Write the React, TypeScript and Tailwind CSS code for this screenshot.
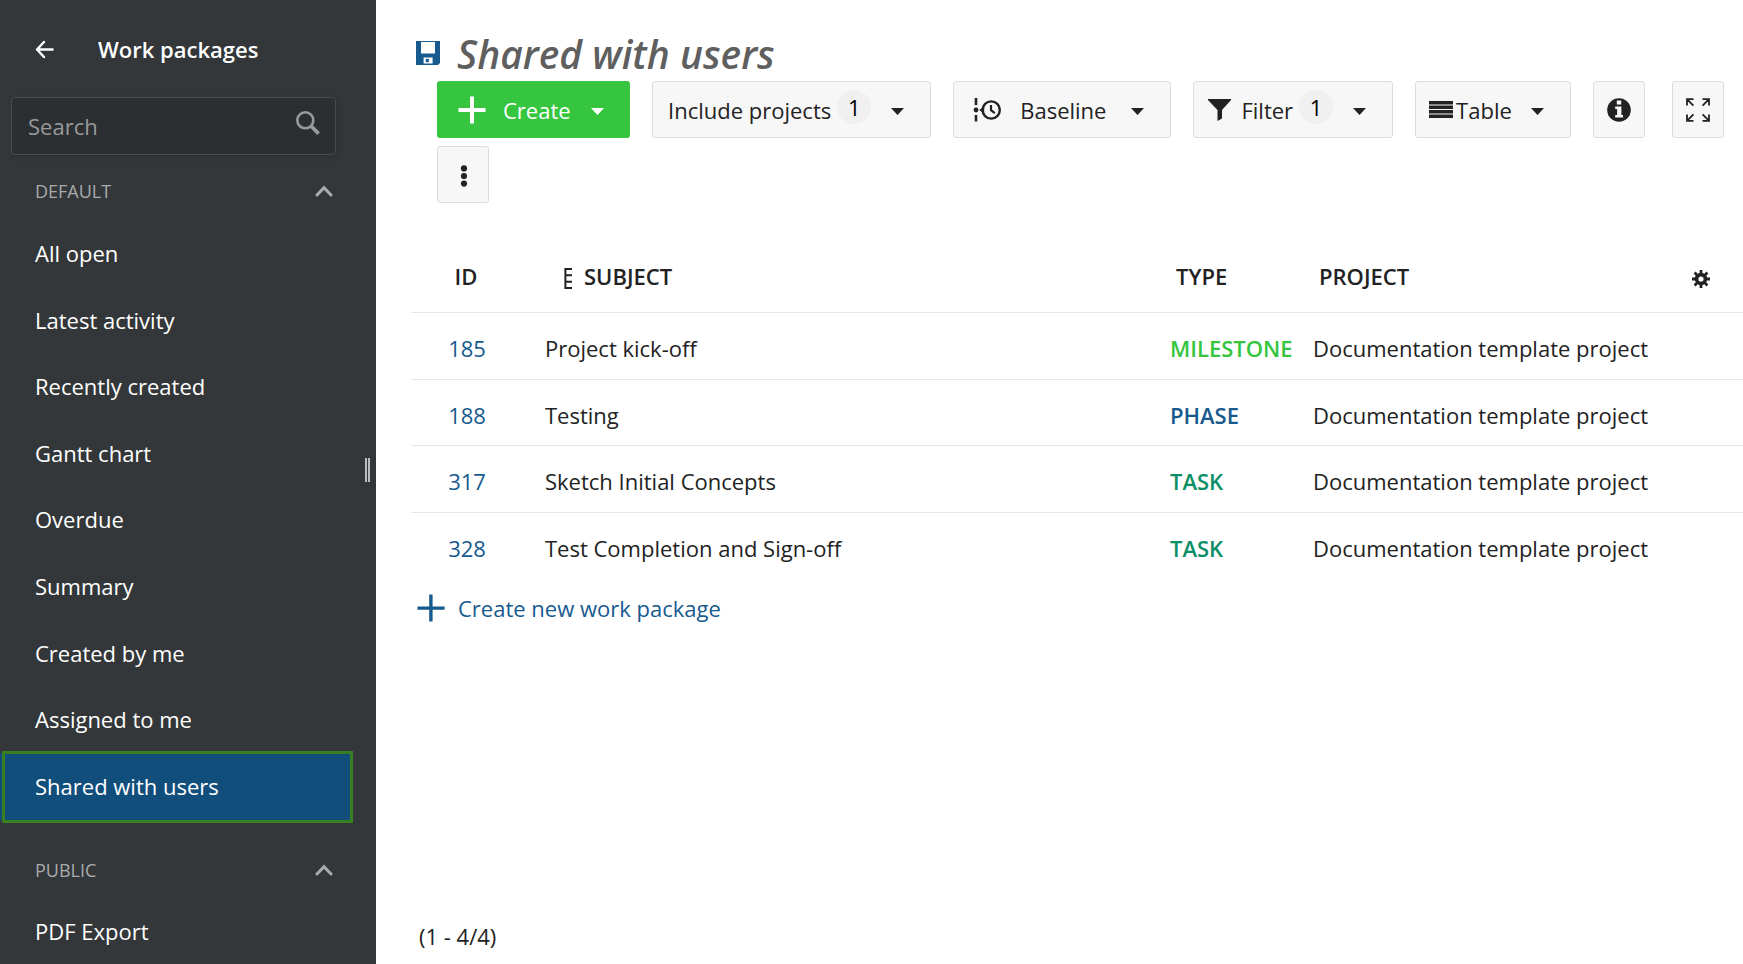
import type { ReactNode } from "react";

const defaultViews = [
  "All open",
  "Latest activity",
  "Recently created",
  "Gantt chart",
  "Overdue",
  "Summary",
  "Created by me",
  "Assigned to me",
  "Shared with users",
];

const workPackages = [
  { id: 185, subject: "Project kick-off", type: "Milestone", color: "text-[#35c53f]" },
  { id: 188, subject: "Testing", type: "Phase", color: "text-[#175a8e]" },
  { id: 317, subject: "Sketch Initial Concepts", type: "Task", color: "text-[#0b8f66]" },
  { id: 328, subject: "Test Completion and Sign-off", type: "Task", color: "text-[#0b8f66]" },
];

function Caret() {
  return (
    <svg className="mt-1 h-[7px] w-[13px] shrink-0" viewBox="0 0 13 7" fill="currentColor" aria-hidden="true">
      <path d="M0 0h13L6.5 7z" />
    </svg>
  );
}

function Plus() {
  return (
    <svg className="size-7 shrink-0" viewBox="0 0 28 28" fill="currentColor" aria-hidden="true">
      <path d="M12 .5h4V12h11.5v4H16v11.5h-4V16H.5v-4H12z" />
    </svg>
  );
}

function ThinPlus() {
  return (
    <svg className="size-7 shrink-0" viewBox="0 0 28 28" fill="currentColor" aria-hidden="true">
      <path d="M12.2 .5h3.4v12h12v3.3h-12v11.7h-3.4V15.8H.5v-3.3h11.7z" />
    </svg>
  );
}

function Chevron() {
  return (
    <svg className="h-3 w-[18px]" viewBox="0 0 18 12" fill="none" stroke="currentColor" strokeWidth="3" strokeLinecap="round" aria-hidden="true">
      <path d="M2 10 9 2.6 16 10" />
    </svg>
  );
}

function Badge({ children }: { children: ReactNode }) {
  return (
    <span className="mr-5 mb-1.5 flex size-[34px] items-center justify-center rounded-full bg-[#f0f0f0] text-black">
      {children}
    </span>
  );
}

const toolButton =
  "flex h-[57px] items-center rounded-[3px] border border-[#dddddd] bg-[#f7f7f7] pr-[26px] text-[#222222]";
const squareButton =
  "flex h-[57px] w-[52px] items-center justify-center rounded-[3px] border border-[#dddddd] bg-[#f7f7f7] text-[#222222]";

function SectionHeading({ children }: { children: ReactNode }) {
  return (
    <button
      type="button"
      className="flex h-[66px] w-full items-center justify-between pt-1.5 pl-[35px] pr-[43px] text-[18px] text-[#a9abac]"
    >
      <span>{children}</span>
      <Chevron />
    </button>
  );
}

function ViewItem({ label }: { label: string }) {
  const selected = label === "Shared with users";
  return (
    <li className="relative">
      <a
        href="#view"
        aria-current={selected ? "page" : undefined}
        className={
          selected
            ? "flex h-full w-[350px] items-center bg-[#124e7c] pb-0.5 pl-[35px]"
            : "flex h-full w-[350px] items-center pb-0.5 pl-[35px]"
        }
      >
        {label}
      </a>
      {selected && (
        <span className="pointer-events-none absolute top-[-2px] left-0.5 h-[72px] w-[351px] border-3 border-[#377f1f]" />
      )}
    </li>
  );
}

function Sidebar() {
  return (
    <aside className="relative h-screen w-[376px] shrink-0 overflow-hidden bg-[#333739] text-white">
      <header className="flex h-[97px] items-center pl-[35px]">
        <button type="button" aria-label="Back" className="w-[63px]">
          <svg className="size-5" viewBox="0 0 20 20" fill="none" stroke="currentColor" strokeWidth="2.4" strokeLinecap="round" strokeLinejoin="round" aria-hidden="true">
            <path d="M9 3 2 10.5 9 18M2.4 10.5H17.6" />
          </svg>
        </button>
        <h2 className="font-semibold">Work packages</h2>
      </header>

      <label className="ml-[11px] flex h-[58px] w-[325px] items-center rounded-[4px] border border-[#484c4f] bg-[#2b2f32] pr-[15px] pl-4 shadow-[2px_2px_6px_rgba(0,0,0,0.15)]">
        <input
          type="text"
          placeholder="Search"
          aria-label="Search"
          className="min-w-0 flex-1 bg-transparent outline-none placeholder:text-[#989a9b]"
        />
        <svg className="mb-1.5 size-6 text-[#989a9b]" viewBox="0 0 24 24" fill="none" stroke="currentColor" aria-hidden="true">
          <circle cx="9.3" cy="9.3" r="8" strokeWidth="2.6" />
          <path d="m15 15 7.6 7.6" strokeWidth="3.8" />
        </svg>
      </label>

      <nav>
        <SectionHeading>DEFAULT</SectionHeading>
        <ul className="grid h-[599px] auto-rows-fr">
          {defaultViews.map((view) => (
            <ViewItem key={view} label={view} />
          ))}
        </ul>
        <div className="pt-3.5">
          <SectionHeading>PUBLIC</SectionHeading>
        </div>
        <ul className="grid h-16">
          <ViewItem label="PDF Export" />
        </ul>
      </nav>

      <div className="absolute top-[458px] right-1.5 flex h-6 w-[5px] justify-between">
        <span className="w-0.5 bg-[#b9bbbc]" />
        <span className="w-0.5 bg-[#b9bbbc]" />
      </div>
    </aside>
  );
}

function Toolbar() {
  return (
    <div className="flex flex-wrap gap-x-[22px] gap-y-2 pl-[61px]">
      <button type="button" className="flex h-[57px] w-[193px] items-center rounded-[3px] bg-[#35c53f] pl-[21px] text-white">
        <Plus />
        <span className="mr-5 ml-[17px]">Create</span>
        <Caret />
      </button>
      <button type="button" className={`${toolButton} pl-[15px]`}>
        <span className="mr-1.5">Include projects</span>
        <Badge>1</Badge>
        <Caret />
      </button>
      <button type="button" className={`${toolButton} pl-[19px]`}>
        <svg className="size-7" viewBox="0 0 28 28" fill="none" stroke="currentColor" aria-hidden="true">
          <path d="M3 2v7M3 19v6.5" strokeWidth="2.6" />
          <circle cx="3" cy="14" r="2.4" fill="currentColor" stroke="none" />
          <path d="m6.2 14 5-3.8v7.6z" fill="currentColor" stroke="none" />
          <circle cx="18.2" cy="14" r="8.6" strokeWidth="2.4" />
          <path d="M18 9v5.2l3.8 3" strokeWidth="2.2" />
        </svg>
        <span className="mr-[25px] ml-[19px]">Baseline</span>
        <Caret />
      </button>
      <button type="button" className={`${toolButton} pl-[14px]`}>
        <svg className="h-[22px] w-[23px]" viewBox="0 0 23 22" fill="currentColor" aria-hidden="true">
          <path d="M0 0h23v1L14 11v8.5L9.5 22V11L0 1z" />
        </svg>
        <span className="mr-1.5 ml-2.5">Filter</span>
        <Badge>1</Badge>
        <Caret />
      </button>
      <button type="button" className={`${toolButton} pl-[13px]`}>
        <svg className="h-[17px] w-6" viewBox="0 0 24 17" fill="currentColor" aria-hidden="true">
          <path d="M0 0h24v3.4H0zM0 4.5h24v3.4H0zM0 9h24v3.4H0zM0 13.5h24V17H0z" />
        </svg>
        <span className="mr-[19px] ml-[3px]">Table</span>
        <Caret />
      </button>
      <button type="button" aria-label="Details" className={squareButton}>
        <svg className="size-6" viewBox="0 0 24 24" aria-hidden="true">
          <circle cx="12" cy="12" r="11.8" fill="currentColor" />
          <path d="M9.8 2.6h4.4v4H9.8zM8.2 8.4h6.2v8.6H16v2.6H8.2V17h1.9v-6H8.2z" fill="#f7f7f7" />
        </svg>
      </button>
      <button type="button" aria-label="Full screen" className={`${squareButton} ml-[5px]`}>
        <svg className="size-6" viewBox="0 0 24 24" fill="none" stroke="currentColor" strokeWidth="1.8" aria-hidden="true">
          <path d="M1 7.5V1.2h6.5M1.2 1.4l6.2 6.2M16.5 1.2H23v6.3M22.8 1.4l-6.2 6.2M1 16.5v6.3h6.5M1.2 22.6l6.2-6.2M16.5 22.8H23v-6.3M22.8 22.6l-6.2-6.2" />
        </svg>
      </button>
      <button type="button" aria-label="More actions" className={`${squareButton} pt-0.5 pl-0.5`}>
        <svg className="h-[22px] w-2" viewBox="0 0 8 22" fill="currentColor" aria-hidden="true">
          <circle cx="4" cy="3.4" r="3.1" />
          <circle cx="4" cy="11" r="3.1" />
          <circle cx="4" cy="18.6" r="3.1" />
        </svg>
      </button>
    </div>
  );
}

function WorkPackageTable() {
  return (
    <table className="w-full table-fixed border-collapse text-left text-[#222222]">
      <colgroup>
        <col className="w-[112px]" />
        <col />
        <col className="w-[143px]" />
        <col className="w-[356px]" />
        <col className="w-[84px]" />
      </colgroup>
      <thead>
        <tr className="h-[71px] border-b border-[#e7e7e7]">
          <th className="pr-0.5 text-center font-semibold">ID</th>
          <th className="font-semibold">
            <span className="flex items-center gap-3 pl-[41px]">
              <svg className="mt-1 h-[21px] w-2" viewBox="0 0 8 21" fill="none" stroke="currentColor" strokeWidth="2" aria-hidden="true">
                <path d="M8 1H1.4V20H8M1.4 7.3H8M1.4 13.7H8" />
              </svg>
              SUBJECT
            </span>
          </th>
          <th className="pl-4 font-semibold">TYPE</th>
          <th className="pl-4 font-semibold">PROJECT</th>
          <th>
            <button type="button" aria-label="Configure view" className="mx-auto flex items-center pt-1.5">
              <svg className="size-[18px]" viewBox="0 0 18 18" fill="none" stroke="currentColor" aria-hidden="true">
                <circle cx="9" cy="9" r="4.4" strokeWidth="3.6" />
                <path d="M9 0v4M9 14v4M0 9h4M14 9h4M2.6 2.6l2.8 2.8M12.6 12.6l2.8 2.8M2.6 15.4l2.8-2.8M12.6 5.4l2.8-2.8" strokeWidth="2.8" />
              </svg>
            </button>
          </th>
        </tr>
      </thead>
      <tbody>
        {workPackages.map((wp) => (
          <tr key={wp.id} className="h-[67px] border-b border-[#e7e7e7] last:border-b-0 even:h-[66px]">
            <td className="pt-[5px] text-center">
              <a href="#work-package" className="text-[#175a8e]">{wp.id}</a>
            </td>
            <td className="pt-[5px] pl-[22px]">{wp.subject}</td>
            <td className={`pt-[5px] pl-2.5 font-semibold uppercase ${wp.color}`}>{wp.type}</td>
            <td className="pt-[5px] pl-2.5 whitespace-nowrap" colSpan={2}>Documentation template project</td>
          </tr>
        ))}
      </tbody>
    </table>
  );
}

export default function App() {
  return (
    <div className="flex min-h-screen bg-white font-['Open_Sans','Noto_Sans',sans-serif] text-[22px] leading-[30px]">
      <Sidebar />
      <main className="flex min-w-0 flex-1 flex-col">
        <div className="flex h-[81px] items-center gap-[17px] pt-6 pl-10">
          <button type="button" aria-label="Save view" className="text-[#175a8e]">
            <svg className="size-6" viewBox="0 0 24 24" aria-hidden="true">
              <path d="M0 0h24v22l-2 2H0z" fill="currentColor" />
              <path d="M5 1h14v11.5H5zM7.6 16.4h9v6.2h-9z" fill="#fff" />
              <path d="M9.8 17.8h3v3.4h-3z" fill="currentColor" />
            </svg>
          </button>
          <h1 className="pt-0.5 text-[39px] leading-[44px] font-semibold text-[#5f5f5f] italic">Shared with users</h1>
        </div>
        <Toolbar />
        <div className="mt-[38px] flex flex-1 flex-col pl-[35px]">
          <WorkPackageTable />
          <a href="#new" className="flex h-[60px] items-center gap-[13px] pl-1.5 text-[#175a8e]">
            <ThinPlus />
            Create new work package
          </a>
          <footer className="mt-auto flex h-14 items-center pl-2 text-[#222222]">(1 - 4/4)</footer>
        </div>
      </main>
    </div>
  );
}
